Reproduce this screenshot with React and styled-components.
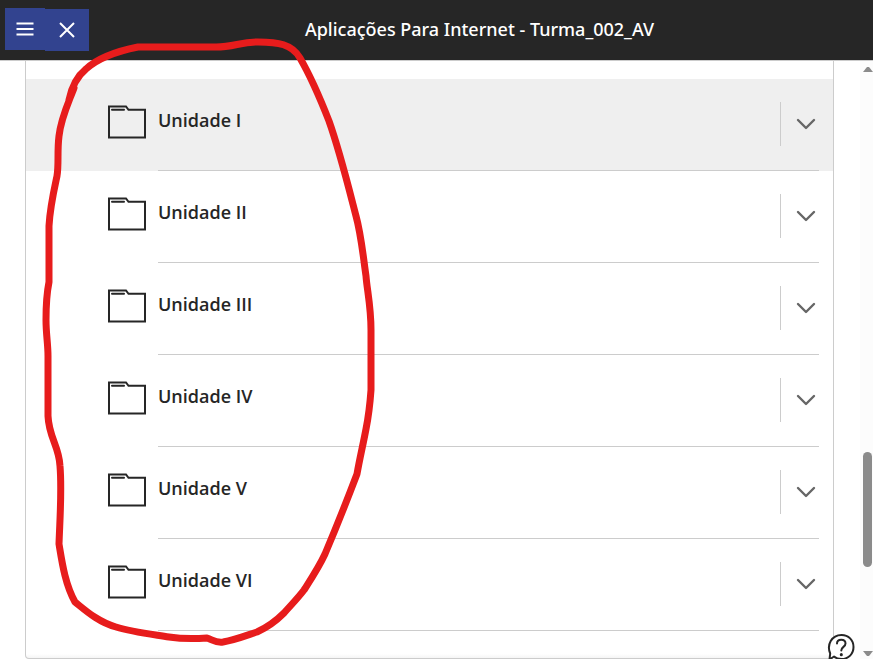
import React from "react";
import styled, { createGlobalStyle } from "styled-components";

const GlobalStyle = createGlobalStyle`
  *, *::before, *::after { box-sizing: border-box; }
  html { overflow: hidden; }
  body {
    margin: 0;
    background: #fff;
    color: #262626;
    font-family: "Noto Sans", "Open Sans", sans-serif;
  }
  button { font: inherit; color: inherit; border: 0; padding: 0; background: none; cursor: pointer; }
  svg { display: block; }
`;

const Page = styled.div`
  position: relative;
  overflow: hidden;
`;

const Header = styled.header`
  display: grid;
  grid-template-columns: 89px 1fr;
  align-items: center;
  min-height: 61px;
  padding-bottom: 1px;
  background: #262626;
  border-bottom: 1px solid #ccc;
  color: #fff;
`;

const HeaderActions = styled.div`
  display: flex;
  align-items: flex-start;
  padding-left: 5px;
`;

const HeaderButton = styled.button`
  display: grid;
  place-items: center;
  flex: ${(p) => p.$grow};
  height: 42px;
  margin-top: ${(p) => (p.$lowered ? "1px" : "0")};
  background: #32438f;
`;

const Title = styled.h1`
  margin: 0;
  padding: 0 3px 2px 0;
  font-size: 18px;
  font-weight: 500;
  line-height: 24px;
  text-align: center;
`;

const Body = styled.div`
  display: flex;
`;

const Main = styled.main`
  flex: 1;
  min-width: 0;
  padding: 0 26px 0 25px;
`;

const Panel = styled.section`
  padding: 18px 0 27px;
  border: 1px solid #ccc;
  border-top: 0;
  border-radius: 0 0 4px 4px;
  background: linear-gradient(to top, #f5f5f5, #fff 4px);
`;

const FolderList = styled.ul`
  margin: 0;
  padding: 0;
  list-style: none;
`;

const FolderRow = styled.li`
  display: flex;
  padding: 0 14px 0 82px;
  background: ${(p) => (p.$active ? "#efefef" : "transparent")};
`;

const FolderIconCell = styled.div`
  flex: 0 0 50px;
  padding-top: 26px;
`;

const FolderContent = styled.div`
  display: flex;
  flex: 1;
  align-items: flex-start;
  justify-content: space-between;
  height: 92px;
  border-bottom: 1px solid #ccc;
`;

const FolderLink = styled.a`
  padding-top: 29px;
  color: #262626;
  font-family: "Open Sans", "Noto Sans", sans-serif;
  font-size: 18px;
  font-weight: 600;
  line-height: 24px;
  text-decoration: none;
`;

const ExpandButton = styled.button`
  display: grid;
  place-items: center;
  width: 39px;
  height: 44px;
  margin-top: 23px;
  padding-left: 11px;
  border-left: 1px solid #ccc;
`;

const ScrollTrack = styled.div`
  display: flex;
  flex: 0 0 13px;
  flex-direction: column;
  align-items: flex-end;
  padding: 6px 0 2px;
  background: #fcfcfc;
`;

const ScrollSpace = styled.div`
  flex: ${(p) => p.$share} 0 0;
`;

const ScrollThumb = styled.div`
  flex: 115 0 0;
  width: 9px;
  margin-right: 1px;
  border-radius: 5px;
  background: #8b8b8b;
`;

const HelpButton = styled.button`
  position: absolute;
  right: 18px;
  bottom: -4px;
`;

const Annotation = styled.svg`
  position: absolute;
  top: 0;
  left: 0;
  pointer-events: none;
`;

const FolderIcon = () => (
  <svg width="38" height="34" viewBox="0 0 38 34" fill="none" stroke="#262626" strokeWidth="2" aria-hidden="true">
    <path d="M1 1.5H18L20.5 4.8H37V32.5H1Z" />
    <path d="M4 4.8H16" strokeLinecap="round" />
  </svg>
);

const ChevronIcon = () => (
  <svg width="20" height="12" viewBox="0 0 20 12" fill="none" stroke="#666" strokeWidth="2.4" strokeLinecap="round" strokeLinejoin="round" aria-hidden="true">
    <path d="M2 2L10 10L18 2" />
  </svg>
);

const ScrollArrow = ({ down }) => (
  <svg width="10" height="6" viewBox="0 0 10 6" fill="#8b8b8b" aria-hidden="true">
    <path d={down ? "M0 0H10L6 5H4Z" : "M0 5H10L6 0H4Z"} />
  </svg>
);

const folders = ["Unidade I", "Unidade II", "Unidade III", "Unidade IV", "Unidade V", "Unidade VI"];

export default function App() {
  return (
    <Page>
      <GlobalStyle />
      <Header>
        <HeaderActions>
          <HeaderButton $grow={40} aria-label="Menu">
            <svg width="18" height="14" viewBox="0 0 18 14" stroke="#fff" strokeWidth="2.2" aria-hidden="true">
              <path d="M0.5 1.5H17.5M0.5 7H17.5M0.5 12.5H17.5" />
            </svg>
          </HeaderButton>
          <HeaderButton $grow={44} $lowered aria-label="Fechar">
            <svg width="16" height="16" viewBox="0 0 16 16" stroke="#fff" strokeWidth="2" aria-hidden="true">
              <path d="M1 1L15 15M15 1L1 15" />
            </svg>
          </HeaderButton>
        </HeaderActions>
        <Title>Aplicações Para Internet - Turma_002_AV</Title>
      </Header>
      <Body>
        <Main>
          <Panel>
            <FolderList>
              {folders.map((name, i) => (
                <FolderRow key={name} $active={i === 0}>
                  <FolderIconCell>
                    <FolderIcon />
                  </FolderIconCell>
                  <FolderContent>
                    <FolderLink href="#">{name}</FolderLink>
                    <ExpandButton aria-label={`Expandir ${name}`}>
                      <ChevronIcon />
                    </ExpandButton>
                  </FolderContent>
                </FolderRow>
              ))}
            </FolderList>
          </Panel>
        </Main>
        <ScrollTrack aria-hidden="true">
          <ScrollArrow />
          <ScrollSpace $share={379} />
          <ScrollThumb />
          <ScrollSpace $share={84} />
          <ScrollArrow down />
        </ScrollTrack>
      </Body>
      <HelpButton aria-label="Ajuda">
        <svg width="28" height="30" viewBox="0 0 28 30" fill="none" stroke="#262626" strokeWidth="2" strokeLinecap="round" strokeLinejoin="round" aria-hidden="true">
          <path fill="#fff" d="M2.5 26.5L3.2 20.5C-0.5 12 4.5 2 14.5 2C21.5 2 26.5 7 26.5 14C26.5 21 21.5 26 14.5 26C11.5 26 9 25.2 7 23.5Z" />
          <path d="M10 10.5C10 5.5 18.5 5.5 18.5 10.5C18.5 14 14.3 13.8 14.3 17.5" />
          <path d="M14.3 21.5V21.7" strokeWidth="3" />
        </svg>
      </HelpButton>
      <Annotation width="400" height="659" viewBox="0 0 400 659" fill="none" stroke="#e71c1c" strokeWidth="7" strokeLinecap="round" strokeLinejoin="round" aria-hidden="true">
        <path d="M74 88C68 104 61 118 59 136C57 152 59 164 57 176C54 190 50 207 49 226L49 282C47 292 46 302 46 320C46 334 48 344 48 356L48 416C49 438 59 446 60 466C62 490 60 516 59 544C62 562 65 584 75 602C85 610 98 622 116 627C132 632 150 634 169 637C182 639 194 639 207 638C213 640 216 643 223 642C235 640 245 636 257 632C268 627 276 621 284 613C291 605 298 598 304 590C313 576 319 567 325 554C336 528 346 503 357 474C360 457 363 445 366 429C369 414 370 404 371 390L371 330C371 306 367 290 366 276C363 255 361 234 356 216C349 189 340 152 329 121C320 98 311 77 300 58C292 44 278 42 258 42C240 42 234 47 216 47L138 47C118 51 98 58 86 69C75 78 71 90 69 100" />
      </Annotation>
    </Page>
  );
}
